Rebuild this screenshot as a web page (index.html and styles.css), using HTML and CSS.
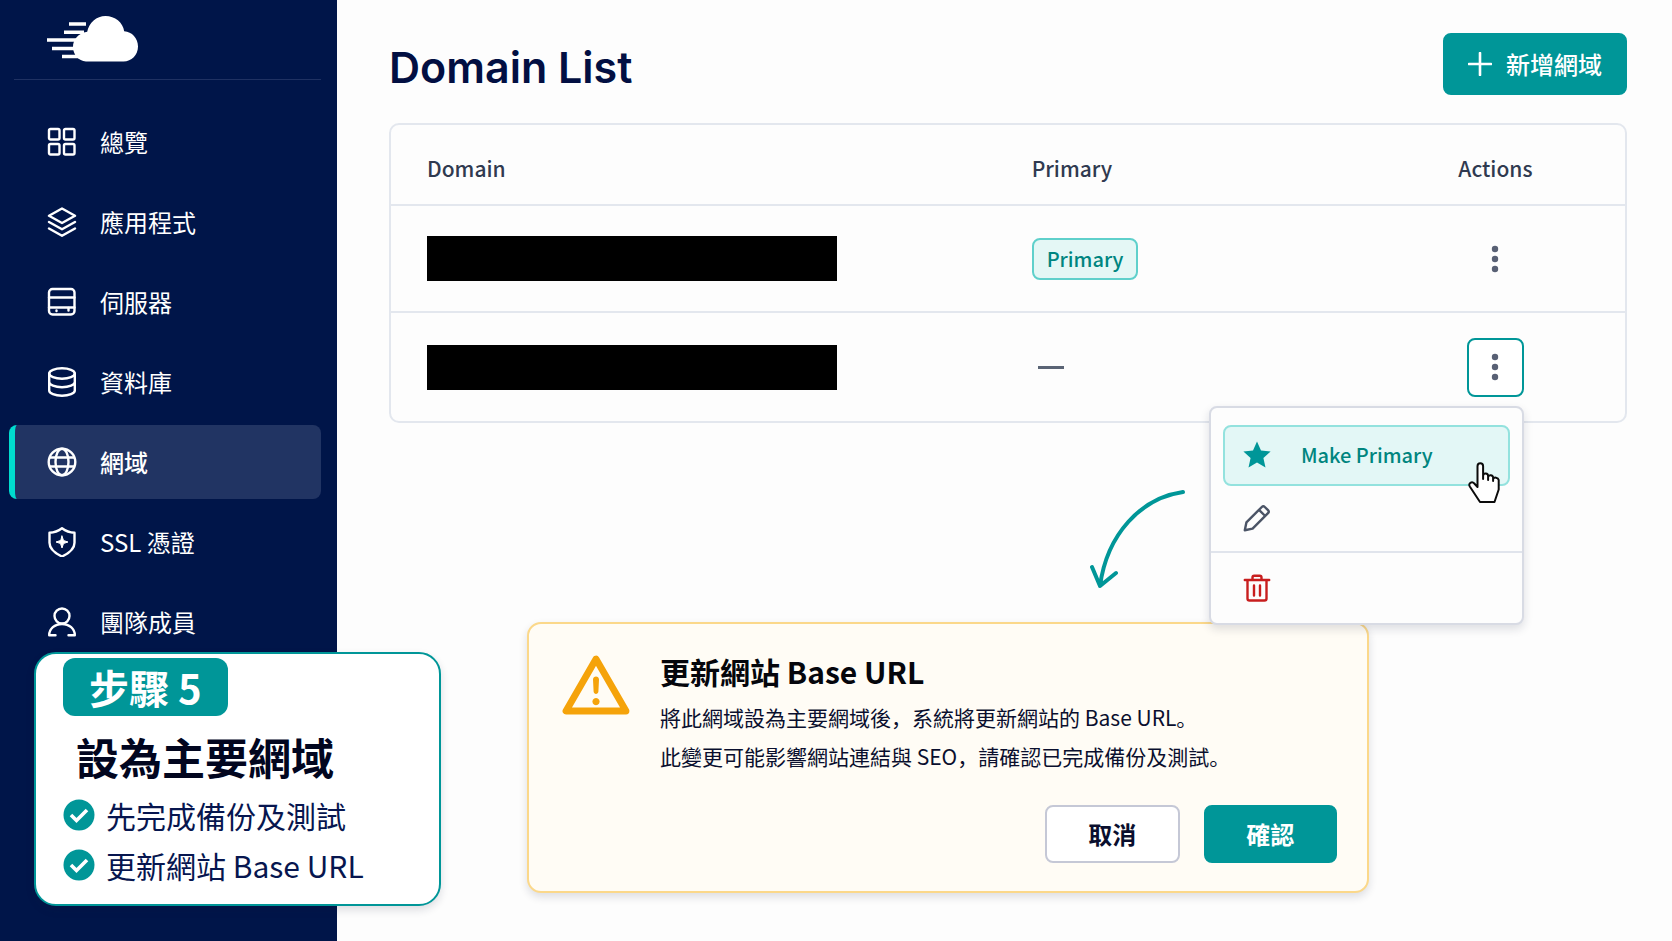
FILE: index.html
```html
<!DOCTYPE html>
<html lang="zh">
<head>
<meta charset="utf-8">
<meta name="viewport" content="width=device-width, initial-scale=1">
<title>Domain List</title>
<link rel="stylesheet" href="styles.css">
</head>
<body>
<div class="app">
  <aside class="sidebar">
    <div class="brand">
      <svg class="brand-logo" viewBox="0 0 92 48" aria-hidden="true">
        <g stroke="#fff" stroke-width="3.4">
          <path d="M22 9h17M17 17.200h20M0 25h32M5 33.500h28M15 41.500h20"/>
        </g>
        <path fill="#fff" d="M39 46.500C31.500 46 26 39.500 26 32c0-7.500 5-13.500 14.200-15.200C42 7.500 49.500 1 58.500 1c9.500 0 17.500 6.500 18.700 15.200C85 16.500 91 23.500 91 31.500 91 40 84.500 46.500 76.500 46.500z"/>
      </svg>
    </div>
    <nav class="nav">
      <a class="nav-item" href="#overview">
        <svg class="icon" viewBox="0 0 30 30" aria-hidden="true"><rect x="2" y="2" width="10.500" height="10.500" rx="1.500"/><rect x="17" y="2" width="10.500" height="10.500" rx="1.500"/><rect x="2" y="17" width="10.500" height="10.500" rx="1.500"/><rect x="17" y="17" width="10.500" height="10.500" rx="1.500"/></svg>
        <span>總覽</span>
      </a>
      <a class="nav-item" href="#apps">
        <svg class="icon" viewBox="0 0 30 30" aria-hidden="true"><path d="M15 1.500 28 8.800 15 16 2 8.800zM2 15l13 7.300L28 15M2 21.500l13 7.300 13-7.300"/></svg>
        <span>應用程式</span>
      </a>
      <a class="nav-item" href="#servers">
        <svg class="icon" viewBox="0 0 30 30" aria-hidden="true"><rect x="2" y="2" width="25.500" height="25.500" rx="3.500"/><path d="M2 10.500h25.500M2 20.500h25.500"/><path d="M9.500 23.500v.5M21.500 21v2.500"/></svg>
        <span>伺服器</span>
      </a>
      <a class="nav-item" href="#databases">
        <svg class="icon" viewBox="0 0 30 30" aria-hidden="true"><ellipse cx="15" cy="6.500" rx="12.800" ry="5.200"/><path d="M2.200 6.500v17c0 2.900 5.700 5.200 12.800 5.200s12.800-2.300 12.800-5.200v-17M2.200 15c0 2.900 5.700 5.200 12.800 5.200s12.800-2.300 12.800-5.200"/></svg>
        <span>資料庫</span>
      </a>
      <a class="nav-item nav-item-active" href="#domains" aria-current="page">
        <svg class="icon" viewBox="0 0 30 30" aria-hidden="true"><circle cx="15" cy="15" r="13.300"/><ellipse cx="15" cy="15" rx="6.500" ry="13.300"/><path d="M3 10.500h24M3 19.500h24"/></svg>
        <span>網域</span>
      </a>
      <a class="nav-item" href="#ssl">
        <svg class="icon" viewBox="0 0 30 30" aria-hidden="true"><path d="M15 1.200c3.500 2.600 8 4.300 12.500 4.600v10c0 6-5.500 10.500-12.500 13.700C8 26.300 2.500 21.800 2.500 15.800v-10C7 5.500 11.500 3.800 15 1.200z"/><path fill="#fff" stroke-width="1" d="M15 9l1.500 4.500L21 15l-4.500 1.500L15 21l-1.500-4.500L9 15l4.500-1.500z"/></svg>
        <span>SSL 憑證</span>
      </a>
      <a class="nav-item" href="#team">
        <svg class="icon" viewBox="0 0 30 30" aria-hidden="true"><circle cx="15" cy="9" r="7.500"/><path d="M8.500 28.300H2.200c0-6.500 5.500-11.300 12.800-11.300s12.800 4.800 12.800 11.300h-6.300"/></svg>
        <span>團隊成員</span>
      </a>
    </nav>
  </aside>

  <main class="main">
    <header class="page-header">
      <h1 class="page-title">Domain List</h1>
      <button class="button button-add" type="button">
        <svg class="plus" viewBox="0 0 24 24" aria-hidden="true"><path d="M12 1v22M1 12h22"/></svg>
        <span>新增網域</span>
      </button>
    </header>

    <table class="domains">
      <colgroup><col class="col-domain"><col class="col-primary"><col class="col-actions"></colgroup>
      <thead>
        <tr><th>Domain</th><th>Primary</th><th class="actions">Actions</th></tr>
      </thead>
      <tbody>
        <tr>
          <td><span class="redacted"></span></td>
          <td><span class="badge">Primary</span></td>
          <td class="actions">
            <div class="action-anchor">
              <button class="kebab" type="button" aria-label="Actions">
                <svg class="dots" viewBox="0 0 8 28" aria-hidden="true"><circle cx="4" cy="4" r="3.200"/><circle cx="4" cy="14" r="3.200"/><circle cx="4" cy="24" r="3.200"/></svg>
              </button>
            </div>
          </td>
        </tr>
        <tr>
          <td><span class="redacted"></span></td>
          <td><span class="dash"></span></td>
          <td class="actions">
            <div class="action-anchor">
              <button class="kebab kebab-open" type="button" aria-label="Actions" aria-expanded="true">
                <svg class="dots" viewBox="0 0 8 28" aria-hidden="true"><circle cx="4" cy="4" r="3.200"/><circle cx="4" cy="14" r="3.200"/><circle cx="4" cy="24" r="3.200"/></svg>
              </button>
              <div class="menu">
                <button class="menu-item menu-item-active" type="button">
                  <svg class="menu-icon star" viewBox="0 0 28 28" aria-hidden="true"><path d="M14 .500l4 8.900 9.600 1-7.200 6.500 2.100 9.600-8.500-5-8.500 5 2.100-9.600L.4 10.400l9.600-1z"/></svg>
                  <span>Make Primary</span>
                  <svg class="cursor" viewBox="0 0 34 42" aria-hidden="true"><path d="M9.500 25V4.200c0-4 5.600-4 5.600 0V17v-3.500c.5-3 5-2.600 5 .3V18v-3c.6-2.700 4.800-2.300 5 .5V19v-2c.9-2.200 5-1.700 5.600 1v9.500L26.500 40H12L1.800 24.500c-2-3.300 2.200-5.500 4.500-3z"/></svg>
                </button>
                <button class="menu-item" type="button" aria-label="Edit">
                  <svg class="menu-icon pencil" viewBox="0 0 28 28" aria-hidden="true"><path d="M1.800 26.200l1.600-7.800L18.800 3c1-1 2-1 3 0l3.200 3.200c1 1 1 2 0 3L9.600 24.600zM16 5.800l6.200 6.200"/></svg>
                </button>
                <button class="menu-item menu-item-last" type="button" aria-label="Delete">
                  <svg class="menu-icon trash" viewBox="0 0 28 28" aria-hidden="true"><path d="M1.800 6h24.400M9.500 6V3.500c0-1 .7-1.700 1.700-1.700h5.600c1 0 1.700.7 1.700 1.700V6M4.500 6v18.500c0 1.200.8 2 2 2h15c1.200 0 2-.8 2-2V6M11 11.500v10M17 11.500v10"/></svg>
                </button>
              </div>
            </div>
          </td>
        </tr>
      </tbody>
    </table>

    <section class="dialog" role="dialog" aria-labelledby="dialog-title">
      <svg class="arrow" viewBox="0 0 100 104" aria-hidden="true"><path d="M94 4C52 10 18 46 11 98M3 79l8 19 16-13"/></svg>
      <svg class="warning" viewBox="0 0 68 60" aria-hidden="true">
        <path d="M34 4 4 56h60z" fill="none" stroke="#f5a30a" stroke-width="6.800" stroke-linejoin="round"/>
        <path d="M31 24.500c0-4 6-4 6 0l-.6 12c-.2 3.200-4.600 3.200-4.800 0zM34 43a3.600 3.600 0 1 0 .01 0z" fill="#f5a30a"/>
      </svg>
      <div class="dialog-body">
        <h2 class="dialog-title" id="dialog-title">更新網站 Base URL</h2>
        <p class="dialog-text">將此網域設為主要網域後，系統將更新網站的 Base URL。<br>此變更可能影響網站連結與 SEO，請確認已完成備份及測試。</p>
        <div class="dialog-actions">
          <button class="button button-cancel" type="button">取消</button>
          <button class="button button-confirm" type="button">確認</button>
        </div>
      </div>
    </section>
  </main>

  <section class="step">
    <span class="step-tag">步驟 5</span>
    <h2 class="step-title">設為主要網域</h2>
    <ul class="step-list">
      <li><svg class="check" viewBox="0 0 32 32" aria-hidden="true"><circle cx="16" cy="16" r="15.500"/><path d="M8 16l5.500 5.500L24 11"/></svg><span>先完成備份及測試</span></li>
      <li><svg class="check" viewBox="0 0 32 32" aria-hidden="true"><circle cx="16" cy="16" r="15.500"/><path d="M8 16l5.500 5.500L24 11"/></svg><span>更新網站 Base URL</span></li>
    </ul>
  </section>
</div>
</body>
</html>
```
FILE: styles.css
```css
* { box-sizing: border-box; }

:root {
  --teal: #009698;
  --navy: #001549;
  --ink: #0a0f2e;
  --line: #e3e7ee;
}

body {
  margin: 0;
  background: #fdfdfd;
  color: var(--ink);
  font-family: "Noto Sans CJK SC", "Noto Sans CJK TC", sans-serif;
}

h1, h2, p, ul { margin: 0; padding: 0; }
button { font: inherit; cursor: pointer; }

.app {
  position: relative;
  display: flex;
  min-height: 100vh;
}

/* Sidebar */
.sidebar {
  flex: 0 0 337px;
  background: var(--navy);
}

.brand {
  margin: 0 16px 0 14px;
  padding: 15px 33px 16px;
  border-bottom: 1px solid #1f3162;
}

.brand-logo { display: block; width: 92px; height: 48px; }

.nav {
  display: flex;
  flex-direction: column;
  gap: 6px;
  padding: 25px 16px 0 9px;
}

.nav-item {
  display: flex;
  align-items: center;
  gap: 23px;
  height: 74px;
  padding-left: 32px;
  border-left: 6px solid transparent;
  border-radius: 8px;
  color: #fff;
  font-size: 24px;
  line-height: 36px;
  text-decoration: none;
}

.nav-item-active {
  border-left-color: #00dccf;
  background: #213463;
  font-weight: 500;
}

.icon {
  width: 30px;
  height: 30px;
  fill: none;
  stroke: #fff;
  stroke-width: 2.4;
  stroke-linejoin: round;
  stroke-linecap: round;
}

/* Main column */
.main {
  flex: 1;
  min-width: 0;
  padding: 32px 45px 48px 52px;
}

.page-header {
  display: flex;
  align-items: center;
  justify-content: space-between;
  margin-bottom: 27px;
}

.page-title {
  padding-top: 6px;
  color: #020f42;
  font-family: Inter, sans-serif;
  font-size: 43px;
  font-weight: 600;
  line-height: 58px;
}

.button {
  display: flex;
  align-items: center;
  justify-content: center;
  border: 2px solid var(--teal);
  border-radius: 8px;
  background: var(--teal);
  color: #fff;
  font-size: 24px;
  font-weight: 700;
  line-height: 36px;
}

.button-add { gap: 14px; height: 62px; padding: 0 23px; font-weight: 500; }

.plus { width: 24px; height: 24px; fill: none; stroke: #fff; stroke-width: 2.600; stroke-linecap: round; }

.domains {
  width: 100%;
  table-layout: fixed;
  border: 2px solid var(--line);
  border-radius: 10px;
  border-spacing: 0;
}

.col-domain { width: 49%; }
.col-primary { width: 30%; }
.col-actions { width: 21%; }

.domains th {
  height: 81px;
  padding: 6px 36px 0;
  border-bottom: 2px solid var(--line);
  color: #303a50;
  font-size: 21px;
  font-weight: 500;
  line-height: 32px;
  text-align: left;
}

.domains td { height: 108px; padding: 0 36px; }
.domains tbody tr:first-child td { height: 107px; border-bottom: 2px solid var(--line); }
.domains .actions { text-align: center; }

.redacted { display: block; width: 77%; height: 45px; background: #000; }

.badge {
  display: inline-block;
  padding: 3px 13px;
  border: 2px solid #5fd0cb;
  border-radius: 8px;
  background: #e4f7f5;
  color: #008580;
  font-size: 20px;
  font-weight: 500;
  line-height: 32px;
}

.dash { display: block; width: 26px; height: 3px; margin-left: 6px; background: #5a6475; }

.action-anchor { position: relative; display: inline-block; vertical-align: middle; }

.kebab {
  display: flex;
  align-items: center;
  justify-content: center;
  width: 57px;
  height: 59px;
  border: 2px solid transparent;
  border-radius: 8px;
  background: transparent;
}

.kebab-open { border-color: var(--teal); background: #fff; }

.dots { width: 8px; height: 28px; fill: #586074; }

/* Row menu */
.menu {
  position: absolute;
  z-index: 2;
  top: calc(100% + 9px);
  right: 0;
  width: 315px;
  border: 2px solid #d8dbe4;
  border-radius: 8px;
  background: #fdfdfd;
  box-shadow: 0 4px 10px rgba(20, 30, 60, .14);
}

.menu-item {
  position: relative;
  display: flex;
  align-items: center;
  gap: 30px;
  width: 100%;
  height: 65px;
  padding: 0 32px;
  border: 0;
  background: transparent;
}

.menu-item-active {
  width: calc(100% - 24px);
  height: 61px;
  margin: 17px 12px 0;
  padding: 0 18px;
  border: 2px solid #93e2de;
  border-radius: 8px;
  background: #e3f7f6;
  color: #00857f;
  font-size: 20px;
  font-weight: 500;
  line-height: 32px;
}

.menu-item-last { height: 72px; border-top: 2px solid #e0e4ec; }

.menu-icon { width: 28px; height: 28px; fill: none; stroke-width: 2.400; stroke-linejoin: round; stroke-linecap: round; }
.star { fill: var(--teal); }
.pencil { stroke: #4b5466; }
.trash { stroke: #c81e1e; }

.cursor {
  position: absolute;
  right: 6px;
  bottom: -20px;
  width: 34px;
  height: 42px;
  fill: #fff;
  stroke: #0b0b0b;
  stroke-width: 2;
  stroke-linejoin: round;
}

/* Confirmation panel */
.dialog {
  position: relative;
  display: flex;
  gap: 30px;
  width: 68%;
  margin: 199px 0 0 138px;
  padding: 27px 30px 28px 33px;
  border: 2px solid #fbd88a;
  border-radius: 14px;
  background: #fffcf5;
  box-shadow: 0 4px 8px rgba(20, 30, 60, .14);
}

.arrow {
  position: absolute;
  top: -136px;
  left: 560px;
  width: 100px;
  height: 104px;
  fill: none;
  stroke: var(--teal);
  stroke-width: 4;
  stroke-linecap: round;
  stroke-linejoin: round;
}

.warning { flex: none; width: 68px; height: 60px; margin-top: 4px; }
.dialog-body { flex: 1; }

.dialog-title {
  color: #05060c;
  font-size: 30px;
  font-weight: 700;
  line-height: 40px;
}

.dialog-text { margin-top: 7px; font-size: 21px; line-height: 39px; }

.dialog-actions { display: flex; justify-content: flex-end; gap: 24px; margin-top: 29px; }
.dialog-actions .button { height: 58px; }
.button-cancel { width: 135px; border-color: #c5c8d6; background: #fff; color: var(--ink); }
.button-confirm { width: 133px; }

/* Step callout */
.step {
  position: absolute;
  z-index: 3;
  top: 652px;
  left: 34px;
  width: 407px;
  padding: 4px 27px 14px;
  border: 2px solid var(--teal);
  border-radius: 22px;
  background: #fff;
  box-shadow: 0 4px 8px rgba(20, 30, 60, .14);
}

.step-tag {
  display: inline-block;
  padding: 0 26px;
  border-radius: 12px;
  background: var(--teal);
  color: #fff;
  font-size: 40px;
  font-weight: 700;
  line-height: 58px;
}

.step-title {
  padding: 10px 0 4px 13px;
  color: #02061f;
  font-size: 43px;
  font-weight: 700;
  line-height: 60px;
}

.step-list {
  color: #07164f;
  font-size: 30px;
  line-height: 50px;
  list-style: none;
}

.step-list li { display: flex; align-items: center; gap: 11px; }

.check { width: 32px; height: 32px; }
.check circle { fill: var(--teal); }
.check path { fill: none; stroke: #fff; stroke-width: 3.600; }
```
